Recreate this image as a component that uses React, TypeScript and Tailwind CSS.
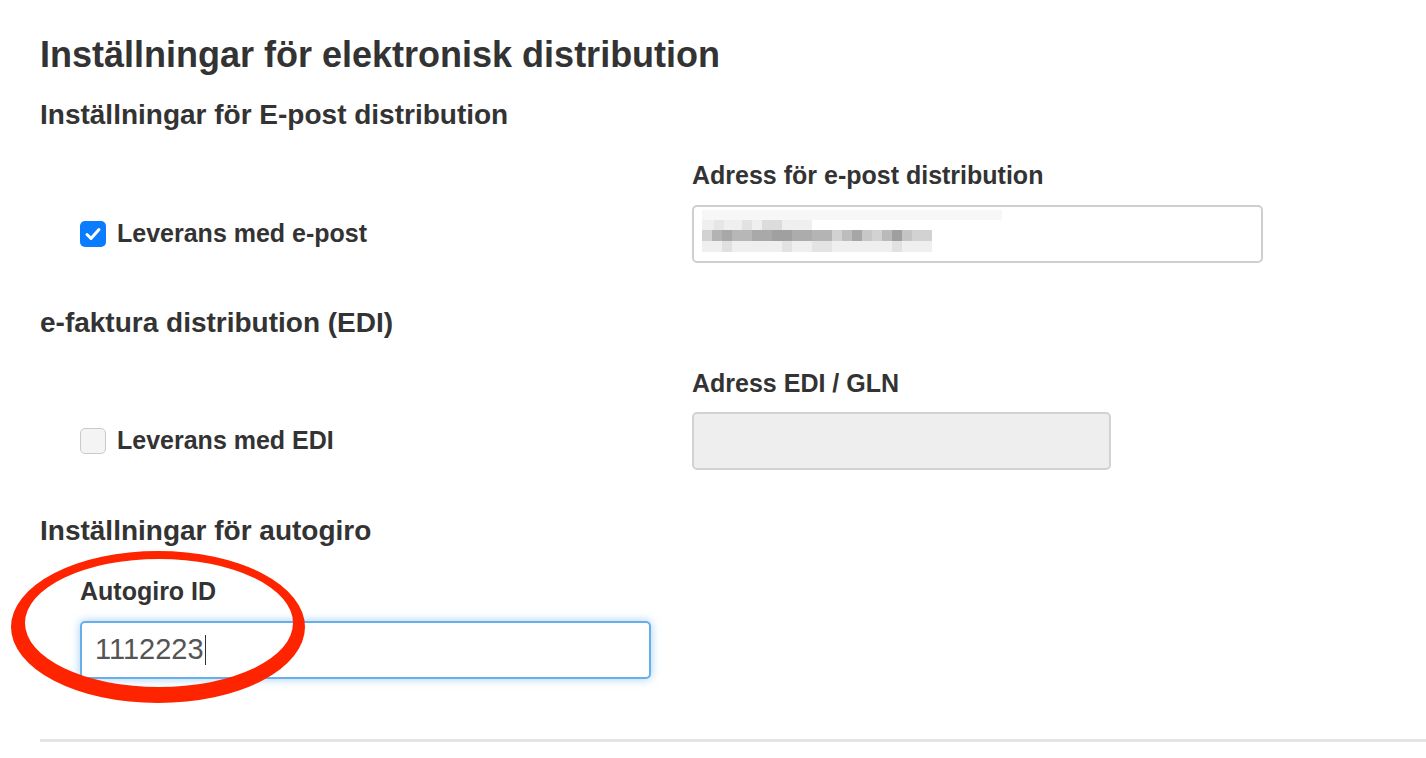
import React from 'react';

const font = { fontFamily: '"Liberation Sans", Arial, sans-serif' };

// pixelated e-mail address (blurred in the original screenshot)
const mosaic: { x: number; y: number; w: number; h: number; c: string }[] = [
  { x: 8, y: 3, w: 300, h: 10, c: '#f7f7f7' },
  { x: 8, y: 13, w: 110, h: 10, c: '#efefef' },
  { x: 20, y: 13, w: 10, h: 10, c: '#e6e6e6' },
  { x: 48, y: 13, w: 10, h: 10, c: '#e2e2e2' },
  { x: 68, y: 13, w: 20, h: 10, c: '#dcdcdc' },
  { x: 8, y: 23, w: 230, h: 11, c: '#d2d2d2' },
  { x: 18, y: 23, w: 10, h: 11, c: '#b3b3b3' },
  { x: 28, y: 23, w: 10, h: 11, c: '#a8a8a8' },
  { x: 38, y: 23, w: 20, h: 11, c: '#b7b7b7' },
  { x: 58, y: 23, w: 20, h: 11, c: '#a9a9a9' },
  { x: 78, y: 23, w: 20, h: 11, c: '#a0a0a0' },
  { x: 98, y: 23, w: 20, h: 11, c: '#acacac' },
  { x: 118, y: 23, w: 20, h: 11, c: '#b4b4b4' },
  { x: 148, y: 23, w: 10, h: 11, c: '#bdbdbd' },
  { x: 158, y: 23, w: 10, h: 11, c: '#a6a6a6' },
  { x: 168, y: 23, w: 10, h: 11, c: '#c7c7c7' },
  { x: 188, y: 23, w: 10, h: 11, c: '#bababa' },
  { x: 198, y: 23, w: 10, h: 11, c: '#9f9f9f' },
  { x: 208, y: 23, w: 10, h: 11, c: '#c4c4c4' },
  { x: 8, y: 34, w: 230, h: 11, c: '#efefef' },
  { x: 28, y: 34, w: 10, h: 11, c: '#e0e0e0' },
  { x: 88, y: 34, w: 10, h: 11, c: '#e2e2e2' },
  { x: 118, y: 34, w: 20, h: 11, c: '#e4e4e4' },
  { x: 198, y: 34, w: 10, h: 11, c: '#e1e1e1' },
];

const Check = ({ checked }: { checked: boolean }) =>
  checked ? (
    <span className="flex h-[26px] w-[26px] items-center justify-center rounded-[5px] bg-[#0a7cff]">
      <svg width="18" height="18" viewBox="0 0 18 18" fill="none">
        <path d="M3 9.5l4 4L15 4.5" stroke="#fff" strokeWidth="3" strokeLinecap="round" strokeLinejoin="round" />
      </svg>
    </span>
  ) : (
    <span className="h-[26px] w-[26px] rounded-[5px] border border-[#c9c9c9] bg-[#f4f4f4]" />
  );

export default function App() {
  return (
    <div className="relative min-h-[758px] w-full overflow-hidden bg-white text-[#333]" style={font}>
      <div className="pl-[40px] pt-[35px]">
        <h1 className="text-[36px] font-bold leading-[40px]">Inställningar för elektronisk distribution</h1>

        <h2 className="mt-[24px] text-[28px] font-bold leading-[32px]">Inställningar för E-post distribution</h2>
        <div className="mt-[29px] grid grid-cols-[652px_1fr] items-end">
          <div className="flex h-[58px] items-center gap-[11px] pl-[40px]">
            <Check checked />
            <span className="text-[25px] font-bold">Leverans med e-post</span>
          </div>
          <div>
            <div className="text-[25px] font-bold leading-[30px]">Adress för e-post distribution</div>
            <div className="relative mt-[15px] h-[58px] w-[571px] rounded-[5px] border-2 border-[#cfcfcf] bg-white">
              <svg className="absolute left-0 top-0" width="320" height="54">
                {mosaic.map((m, i) => (
                  <rect key={i} x={m.x} y={m.y} width={m.w} height={m.h} fill={m.c} />
                ))}
              </svg>
            </div>
          </div>
        </div>

        <h2 className="mt-[44px] text-[28px] font-bold leading-[32px]">e-faktura distribution (EDI)</h2>
        <div className="mt-[29px] grid grid-cols-[652px_1fr] items-end">
          <div className="flex h-[58px] items-center gap-[11px] pl-[40px]">
            <Check checked={false} />
            <span className="text-[25px] font-bold">Leverans med EDI</span>
          </div>
          <div>
            <div className="text-[25px] font-bold leading-[30px]">Adress EDI / GLN</div>
            <div className="mt-[14px] h-[58px] w-[419px] rounded-[5px] border-2 border-[#d2d2d2] bg-[#eeeeee]" />
          </div>
        </div>

        <h2 className="mt-[45px] text-[28px] font-bold leading-[32px]">Inställningar för autogiro</h2>
        <div className="pl-[40px]">
          <div className="mt-[29px] text-[25px] font-bold leading-[30px]">Autogiro ID</div>
          <div className="mt-[15px] flex h-[58px] w-[571px] items-center rounded-[5px] border-2 border-[#66afe9] bg-white pl-[13px] shadow-[0_0_10px_rgba(102,175,233,0.6)]">
            <span className="text-[29px] text-[#555]">1112223</span>
            <span className="ml-px h-[30px] w-px bg-[#333]" />
          </div>
        </div>

        <div className="mt-[60px] h-[3px] bg-[#e4e4e4]" />
      </div>

      {/* red annotation ring */}
      <svg className="pointer-events-none absolute left-0 top-0" width="1426" height="758">
        <path
          fillRule="evenodd"
          fill="#ff2400"
          d="M11 627a147 76 0 1 0 294 0a147 76 0 1 0 -294 0Z M25 623a134 64 0 1 0 268 0a134 64 0 1 0 -268 0Z"
        />
      </svg>
    </div>
  );
}
